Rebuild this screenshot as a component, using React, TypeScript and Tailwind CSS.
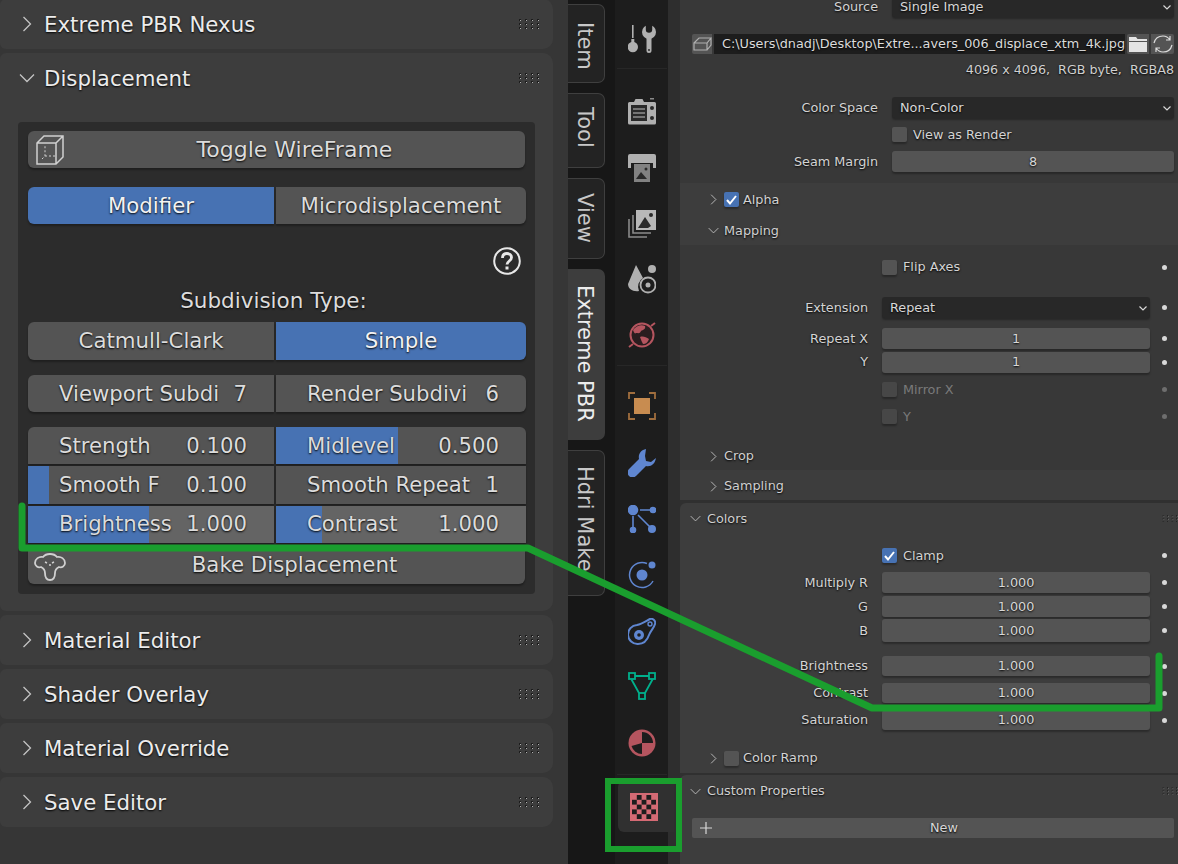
import type { ReactNode } from 'react'

const shadow = '[text-shadow:0_1px_2px_#000]'
const raised = 'shadow-[0_2px_2px_rgba(0,0,0,0.3)]'

function Chevron({ open, size = 16 }: { open?: boolean; size?: number }) {
  return (
    <svg width={size} height={size} viewBox="0 0 16 16" fill="none" stroke="currentColor" strokeWidth="1.3" className="shrink-0 text-[#c4c4c4]">
      {open ? <path d="M1 4.5l7 7 7-7" /> : <path d="M4.5 1l7 7-7 7" />}
    </svg>
  )
}

function Grip({ scale = 1 }: { scale?: number }) {
  const dots = []
  for (let x = 0; x < 4; x++) {
    for (let y = 0; y < 3; y++) {
      dots.push(<rect key={`${x}-${y}`} x={x * 6} y={y * 4} width="2" height="2" fill="#1c1c1c" />)
      dots.push(<rect key={`l${x}-${y}`} x={x * 6 + 1} y={y * 4 + 1} width="1" height="1" fill="#b0b0b0" />)
    }
  }
  return (
    <svg width={22 * scale} height={10 * scale} viewBox="0 0 20 10" className="shrink-0">
      {dots}
    </svg>
  )
}

function Panel({ title, open, children, className }: { title: string; open?: boolean; children?: ReactNode; className: string }) {
  return (
    <div className={`rounded-r-[10px] rounded-l-[6px] bg-[#3d3d3d] ${className}`}>
      <div className="flex h-[50px] items-center pl-[19px] pr-[13px]">
        <Chevron open={open} />
        <span className={`ml-[9px] flex-1 pt-[2px] text-[21.3px] text-[#ececec] ${shadow}`}>{title}</span>
        <Grip />
      </div>
      {children}
    </div>
  )
}

function BigButton({ children, active, className = '' }: { children: ReactNode; active?: boolean; className?: string }) {
  return (
    <div className={`flex items-center justify-center text-[21.3px] text-[#dcdcdc] ${shadow} ${active ? 'bg-[#4772b3] text-[#f2f2f2]' : 'bg-[#545454]'} ${raised} ${className}`}>
      {children}
    </div>
  )
}

function Cell({ label, value, fill, light, className = '' }: { label: string; value: string; fill?: string; light?: boolean; className?: string }) {
  return (
    <div className={`relative flex items-center justify-between pl-[31px] pr-[27px] text-[21.2px] text-[#dcdcdc] ${light ? 'bg-[#646464]' : 'bg-[#545454]'} ${raised} ${className}`}>
      {fill && <div className={`absolute inset-y-0 left-0 bg-[#4772b3] ${fill}`} />}
      <span className={`relative ${shadow}`}>{label}</span>
      <span className={`relative ${shadow}`}>{value}</span>
    </div>
  )
}

function Row({ label, children, dot, disabled, className = '' }: { label?: string; children: ReactNode; dot?: boolean; disabled?: boolean; className?: string }) {
  return (
    <div className={`flex items-center ${className}`}>
      <div className={`w-[188px] shrink-0 text-right text-[12.8px] text-[#d4d4d4] ${shadow}`}>{label}</div>
      <div className="ml-[14px] w-[268px] shrink-0">{children}</div>
      <div className="ml-[12px] flex w-[5px] justify-center">
        {dot && <div className={`h-[5px] w-[5px] rounded-full ${disabled ? 'bg-[#6e6e6e]' : 'bg-[#d8d8d8]'}`} />}
      </div>
    </div>
  )
}

function Field({ children, dark, className = 'h-[21px]' }: { children?: ReactNode; dark?: boolean; className?: string }) {
  return (
    <div className={`relative flex items-center rounded-[3px] text-[12.8px] text-[#d8d8d8] ${shadow} ${dark ? 'justify-start bg-[#282828] pl-[8px]' : 'justify-center bg-[#545454]'} ${raised} ${className}`}>
      {children}
      {dark && (
        <svg width="10" height="10" viewBox="0 0 10 10" fill="none" stroke="#d8d8d8" strokeWidth="1.2" className="absolute right-[2px] top-[6px]">
          <path d="M1.5 3.5L5 7l3.5-3.5" />
        </svg>
      )}
    </div>
  )
}

function Check({ checked, dim, tight, label }: { checked?: boolean; dim?: boolean; tight?: boolean; label: string }) {
  return (
    <div className={`flex items-center ${tight ? 'gap-[4px]' : 'gap-[6px]'}`}>
      <div className={`flex h-[15px] w-[15px] items-center justify-center rounded-[2px] ${raised} ${checked ? 'bg-[#4772b3]' : dim ? 'bg-[#474747]' : 'bg-[#545454]'}`}>
        {checked && (
          <svg width="13" height="13" viewBox="0 0 13 13" fill="none" stroke="#fff" strokeWidth="2">
            <path d="M2 7l3 3.5L11 3" />
          </svg>
        )}
      </div>
      <span className={`text-[12.8px] ${dim ? 'text-[#7a7a7a]' : `text-[#d4d4d4] ${shadow}`}`}>{label}</span>
    </div>
  )
}

function SubHeader({ label, open, className = '' }: { label: ReactNode; open?: boolean; className?: string }) {
  return (
    <div className={`flex items-center pl-[28px] pt-[2px] text-[12.8px] text-[#d0d0d0] ${shadow} ${className}`}>
      <Chevron open={open} size={11} />
      <span className="ml-[5px] flex items-center">{label}</span>
    </div>
  )
}

function Tab({ label, active, className }: { label: string; active?: boolean; className: string }) {
  return (
    <div className={`flex w-[37px] items-center justify-start rounded-r-[7px] pr-[4px] text-[21px] [writing-mode:vertical-rl] ${active ? 'bg-[#3d3d3d] text-[#ececec]' : 'border border-l-0 border-[#3f3f3f] bg-[#232323] text-[#c8c8c8]'} ${className}`}>
      {label}
    </div>
  )
}

function ToolIcon() {
  return (
    <svg width="28" height="28" viewBox="0 0 28 28" fill="#b0b0b0">
      <rect x="4" y="0" width="1.6" height="13" />
      <circle cx="4.8" cy="22" r="5.2" />
      <rect x="3.3" y="14" width="3" height="4" />
      <circle cx="21" cy="7" r="7" />
      <path d="M18.500 10h5v15.500a2.500 2.500 0 0 1-5 0z" />
      <path d="M17.800 -1h6.400v5.500a3.200 3.200 0 0 1-6.400 0z" fill="#1d1d1d" />
      <circle cx="21" cy="25" r="0.900" fill="#1d1d1d" />
    </svg>
  )
}

function RenderIcon() {
  return (
    <svg width="28" height="28" viewBox="0 0 28 28">
      <path d="M1.5 5H6l1.5-3h7L16 5h10.5A1.5 1.5 0 0 1 28 6.5V26a1.5 1.5 0 0 1-1.5 1.5h-25A1.5 1.5 0 0 1 0 26V6.5A1.5 1.5 0 0 1 1.5 5z" fill="#b0b0b0" />
      <rect x="22" y="1" width="4" height="1.5" fill="#8a8a8a" />
      <rect x="3" y="8" width="16" height="16" fill="#2a2a2a" />
      <path d="M5 12h12M5 16h12M5 20h12" stroke="#8e8e8e" strokeWidth="1.3" />
      <circle cx="24" cy="11" r="2" fill="#2a2a2a" />
      <circle cx="24" cy="21" r="2" fill="#2a2a2a" />
    </svg>
  )
}

function OutputIcon() {
  return (
    <svg width="28" height="28" viewBox="0 0 28 28">
      <path d="M2 0h24a2 2 0 0 1 2 2v12h-3V9H3v5H0V2a2 2 0 0 1 2-2z" fill="#b0b0b0" />
      <rect x="6" y="10" width="16" height="18" fill="#828282" />
      <path d="M8 25l5-7 6 7z" fill="#2a2a2a" />
      <circle cx="18" cy="15" r="1.5" fill="#2a2a2a" />
    </svg>
  )
}

function ViewLayerIcon() {
  return (
    <svg width="28" height="28" viewBox="0 0 28 28" fill="none">
      <rect x="8" y="0" width="20" height="20" fill="#b8b8b8" />
      <path d="M10 18l7-11 6 9-3 2z" fill="#2a2a2a" />
      <circle cx="23" cy="5" r="2" fill="#2a2a2a" />
      <path d="M5 5v18h18M1 9v18h18" stroke="#8a8a8a" strokeWidth="1.6" />
    </svg>
  )
}

function SceneIcon() {
  return (
    <svg width="28" height="30" viewBox="0 0 28 30">
      <path d="M8 0L0 19c0 5 5 8 11 7a10 10 0 0 1 4-13z" fill="#b0b0b0" />
      <circle cx="24" cy="4" r="4" fill="#b0b0b0" />
      <circle cx="20" cy="20" r="7.5" fill="none" stroke="#b0b0b0" strokeWidth="1.8" />
      <circle cx="20" cy="20" r="2.5" fill="#b0b0b0" />
    </svg>
  )
}

function WorldIcon() {
  return (
    <svg width="28" height="28" viewBox="0 0 28 28">
      <circle cx="14" cy="14" r="11.5" fill="#2a1d1f" stroke="#b5555f" strokeWidth="2" />
      <path d="M5 9c3-4 8-6 12-4 1 3-2 4-4 5-1 3-3 2-5 2-1 1-2 0-3-3zM12 16c3-1 6 0 9 2-1 3-3 5-6 5-1-2-2-4-3-7z" fill="#b5555f" />
      <path d="M23 5l4-3M5 23l-4 3" stroke="#b5555f" strokeWidth="2" />
    </svg>
  )
}

function ObjectIcon() {
  return (
    <svg width="28" height="28" viewBox="0 0 28 28" fill="none">
      <path d="M7 1H1v6M21 1h6v6M7 27H1v-6M21 27h6v-6" stroke="#a06e3e" strokeWidth="1.8" />
      <rect x="6" y="6" width="16" height="16" fill="#c88c50" />
    </svg>
  )
}

function ModifierIcon() {
  return (
    <svg width="28" height="28" viewBox="0 0 28 28" fill="#5f86d0">
      <path d="M18 0c-5 1-8 5-7 10L1 20a4.5 4.5 0 0 0 7 7l10-10c5 1 9-2 10-8l-5 4-5-1-1-5z" />
    </svg>
  )
}

function ParticlesIcon() {
  return (
    <svg width="28" height="28" viewBox="0 0 28 28" fill="#5f86d0" stroke="#5f86d0" strokeWidth="1.6">
      <circle cx="5" cy="5" r="4.5" />
      <circle cx="25" cy="5" r="2.5" />
      <circle cx="5" cy="25" r="2.5" />
      <circle cx="24" cy="24" r="3.2" />
      <path d="M12 5h11M5 11v12M10 10l12 12" fill="none" />
    </svg>
  )
}

function PhysicsIcon() {
  return (
    <svg width="28" height="28" viewBox="0 0 28 28" fill="none">
      <circle cx="14" cy="14" r="5.5" fill="#5f86d0" />
      <circle cx="24" cy="4" r="3.5" fill="#5f86d0" />
      <path d="M19 2.5A12.5 12.5 0 1 0 25 20" stroke="#5f86d0" strokeWidth="1.5" />
    </svg>
  )
}

function ConstraintIcon() {
  return (
    <svg width="28" height="28" viewBox="0 0 28 28" fill="none">
      <path d="M22 1c3-1 6 2 5 5-1 4-4 6-6 11-2 6-6 9-11 9A9.500 9.500 0 0 1 9 7c5-1 9-4 13-6z" stroke="#5f86d0" strokeWidth="2" />
      <circle cx="11" cy="17" r="5" fill="#5f86d0" />
      <circle cx="11" cy="17" r="1.800" fill="#1d1d1d" />
      <circle cx="22" cy="6" r="2" stroke="#5f86d0" strokeWidth="1.400" />
    </svg>
  )
}

function DataIcon() {
  return (
    <svg width="28" height="28" viewBox="0 0 28 28" fill="none" stroke="#00b08c" strokeWidth="1.800">
      <path d="M7 4h14M3.500 7.500L11 21M24.500 7.500L17 21" />
      <rect x="1" y="1" width="6" height="6" />
      <rect x="21" y="1" width="6" height="6" />
      <rect x="11" y="21" width="6" height="6" />
    </svg>
  )
}

function MaterialIcon() {
  return (
    <svg width="28" height="28" viewBox="0 0 28 28">
      <circle cx="14" cy="14" r="13.500" fill="#b5555f" />
      <path d="M14 14V3a11 11 0 0 1 11 11z" fill="#1d1d1d" />
      <path d="M14 14v11a11 11 0 0 1-10.500-8z" fill="#1d1d1d" />
    </svg>
  )
}

function TextureIcon() {
  const cells = []
  for (let r = 0; r < 5; r++) {
    for (let c = 0; c < 5; c++) {
      if ((r + c) % 2 === 1) cells.push(<rect key={`${r}-${c}`} x={2 + c * 4.800} y={2 + r * 4.800} width="4.800" height="4.800" fill="#1d1d1d" />)
    }
  }
  return (
    <svg width="28" height="28" viewBox="0 0 28 28">
      <rect width="28" height="28" fill="#d46a74" />
      {cells}
    </svg>
  )
}

function CubeIcon() {
  return (
    <svg width="28" height="30" viewBox="0 0 28 30" fill="none" stroke="#d0d0d0" strokeWidth="1.500">
      <path d="M1 8l7-7h19v21l-7 7H1zM1 8h19v21M20 8l7-7" />
      <path d="M6 24l3-3V10M9 21h11" strokeDasharray="2 2" strokeWidth="1" />
    </svg>
  )
}

function BakeIcon() {
  return (
    <svg width="32" height="30" viewBox="0 0 32 30" fill="none" stroke="#d0d0d0" strokeWidth="1.800">
      <path d="M9 6C5 5 1 8 1 12c0 3 3 5 6 4 2 1 4 3 4 6 0 5 2 7 5 7s5-2 5-7c0-3 2-5 4-6 3 1 6-1 6-4 0-4-4-7-8-6C20 2 12 2 9 6z" />
      <path d="M11 11l2 1M20 11l-2 1M15 14h2" strokeWidth="1.400" />
    </svg>
  )
}

export default function App() {
  return (
    <div className="relative flex h-[864px] w-[1178px] overflow-hidden bg-[#353535] font-['DejaVu_Sans',sans-serif]">
      {/* N panel */}
      <div className="flex h-full w-[568px] shrink-0 flex-col bg-[#363636] pr-[15px]">
        <Panel title="Extreme PBR Nexus" className="-mt-[1px] h-[50px] shrink-0" />
        <Panel title="Displacement" open className="mt-[4px] h-[558px] shrink-0">
          <div className="ml-[18px] mt-[19px] h-[472px] w-[517px] rounded-[4px] bg-[#2c2c2c] px-[10px] pt-[9px]">
            <BigButton className="relative h-[37px] rounded-[6px] pl-[36px] text-[22px]">
              <div className="absolute left-[8px] top-[4px]">
                <CubeIcon />
              </div>
              Toggle WireFrame
            </BigButton>
            <div className="mt-[19px] grid h-[37px] grid-cols-[246px_250px] gap-x-[2px]">
              <BigButton active className="rounded-l-[6px]">Modifier</BigButton>
              <BigButton className="rounded-r-[6px]">Microdisplacement</BigButton>
            </div>
            <div className="mt-[23px] flex justify-end pr-[4px]">
              <svg width="28" height="28" viewBox="0 0 28 28" fill="none" stroke="#e8e8e8" strokeWidth="2">
                <circle cx="14" cy="14" r="12.800" />
                <path d="M9.500 11c0-3 2-4.500 4.500-4.500s4.500 1.500 4.500 4c0 3.500-4.500 3.500-4.500 7" strokeWidth="2.800" />
                <rect x="12.500" y="19.500" width="3" height="3" fill="#e8e8e8" stroke="none" />
              </svg>
            </div>
            <div className={`mt-[12px] h-[27px] pr-[6px] text-center text-[21.500px] leading-[27px] text-[#dcdcdc] ${shadow}`}>Subdivision Type:</div>
            <div className="mt-[8px] grid h-[38px] grid-cols-[246px_250px] gap-x-[2px]">
              <BigButton className="rounded-l-[6px]">Catmull-Clark</BigButton>
              <BigButton active className="rounded-r-[6px]">Simple</BigButton>
            </div>
            <div className="mt-[15px] grid h-[37px] grid-cols-[246px_250px] gap-x-[2px]">
              <Cell label="Viewport Subdi" value="7" className="rounded-l-[6px]" />
              <Cell label="Render Subdivi" value="6" className="rounded-r-[6px]" />
            </div>
            <div className="mt-[15px] grid h-[116px] grid-cols-[246px_250px] grid-rows-3 gap-[2px]">
              <Cell label="Strength" value="0.100" className="rounded-tl-[6px]" />
              <Cell label="Midlevel" value="0.500" fill="w-[122px]" className="rounded-tr-[6px]" />
              <Cell label="Smooth F" value="0.100" fill="w-[21px]" />
              <Cell label="Smooth Repeat" value="1" />
              <Cell label="Brightness" value="1.000" fill="w-[121px]" light />
              <Cell label="Contrast" value="1.000" fill="w-[46px]" light />
            </div>
            <BigButton className="relative mt-[2px] h-[39px] rounded-b-[6px] pl-[36px]">
              <div className="absolute left-[6px] top-[6px]">
                <BakeIcon />
              </div>
              Bake Displacement
            </BigButton>
          </div>
        </Panel>
        <Panel title="Material Editor" className="mt-[4px] h-[50px] shrink-0" />
        <Panel title="Shader Overlay" className="mt-[4px] h-[50px] shrink-0" />
        <Panel title="Material Override" className="mt-[4px] h-[50px] shrink-0" />
        <Panel title="Save Editor" className="mt-[4px] h-[50px] shrink-0" />
      </div>

      {/* tabs */}
      <div className="flex h-full w-[47px] shrink-0 flex-col bg-[#171717] pt-[4px]">
        <Tab label="Item" className="h-[79px] pt-[17px]" />
        <Tab label="Tool" className="mt-[10px] h-[75px] pt-[13px]" />
        <Tab label="View" className="mt-[10px] h-[81px] pt-[14px]" />
        <Tab label="Extreme PBR" active className="mt-[10px] h-[171px] pt-[16px]" />
        <Tab label="Hdri Make" className="mt-[10px] h-[146px] pt-[15px]" />
      </div>

      {/* properties editor tabs */}
      <div className="flex h-full w-[53px] shrink-0 flex-col items-center bg-[#1d1d1d] pt-[25px]">
        <ToolIcon />
        <div className="mt-[15px] h-px w-[50px] bg-[#272727]" />
        <div className="mt-[28px]"><RenderIcon /></div>
        <div className="mt-[29px]"><OutputIcon /></div>
        <div className="mt-[28px]"><ViewLayerIcon /></div>
        <div className="mt-[27px]"><SceneIcon /></div>
        <div className="mt-[26px]"><WorldIcon /></div>
        <div className="mt-[16px] h-px w-[50px] bg-[#272727]" />
        <div className="mt-[26px]"><ObjectIcon /></div>
        <div className="mt-[29px]"><ModifierIcon /></div>
        <div className="mt-[28px]"><ParticlesIcon /></div>
        <div className="mt-[28px]"><PhysicsIcon /></div>
        <div className="mt-[29px]"><ConstraintIcon /></div>
        <div className="mt-[26px]"><DataIcon /></div>
        <div className="mt-[29px]"><MaterialIcon /></div>
        <div className="mt-[17px] h-px w-[50px] bg-[#272727]" />
        <div className="relative z-10 mt-[6px] ml-[3px] flex h-[51px] w-[56px] shrink-0 items-center self-start rounded-l-[6px] bg-[#303030] pl-[12px]">
          <TextureIcon />
        </div>
      </div>

      {/* gutter */}
      <div className="h-full w-[12px] shrink-0 bg-[#2e2e2e]" />

      {/* properties */}
      <div className="h-full w-[498px] shrink-0 bg-[#303030] text-[12.8px]">
        <div className="h-[183px] overflow-hidden bg-[#383838] pl-[12px]">
          <div className="-mt-[4px] flex h-[21px] items-center">
            <div className={`w-[186px] text-right leading-[17px] text-[#d4d4d4] ${shadow}`}>Source</div>
            <div className="ml-[14px] w-[282px]">
              <Field dark>Single Image</Field>
            </div>
          </div>
          <div className="mt-[17px] flex h-[20px] items-stretch">
            <div className="flex w-[20px] items-center justify-center rounded-l-[2px] bg-[#545454]">
              <svg width="19" height="14" viewBox="0 0 19 14" fill="none" stroke="#b0b0b0" strokeWidth="1.200">
                <path d="M1 6l5-5h12l-4 5H1v7h13V6M14 13l4-5V1" />
              </svg>
            </div>
            <div className={`ml-[2px] flex w-[411px] items-center bg-[#1d1d1d] pl-[8px] text-[12.8px] whitespace-nowrap text-[#dcdcdc] ${shadow}`}>
              C:\Users\dnadj\Desktop\Extre...avers_006_displace_xtm_4k.jpg
            </div>
            <div className="ml-[2px] flex w-[22px] items-center justify-center rounded-l-[2px] bg-[#545454]">
              <svg width="18" height="16" viewBox="0 0 18 16" fill="#e4e4e4">
                <path d="M0 1h7l1.500 2H18v2H0zM0 6h18v10H0z" />
              </svg>
            </div>
            <div className="ml-[2px] flex w-[23px] items-center justify-center rounded-r-[2px] bg-[#545454]">
              <svg width="20" height="18" viewBox="0 0 20 18" fill="none" stroke="#dcdcdc" strokeWidth="1.200">
                <path d="M1 8c1-4 4-7 9-7 3 0 5 1 7 4M17 1v4h-4M19 10c-1 4-4 7-9 7-3 0-5-1-7-4M3 17v-4h4" />
              </svg>
            </div>
          </div>
          <div className={`mt-[6px] h-[20px] pr-[4px] text-right text-[12.7px] leading-[20px] whitespace-pre text-[#d0d0d0] ${shadow}`}>4096 x 4096,  RGB byte,  RGBA8</div>
          <div className="mt-[17px] flex h-[21px] items-center">
            <div className={`w-[186px] text-right text-[#d4d4d4] ${shadow}`}>Color Space</div>
            <div className="ml-[14px] w-[282px]"><Field dark>Non-Color</Field></div>
          </div>
          <div className="mt-[8px] ml-[200px] flex h-[17px] items-center"><Check label="View as Render" /></div>
          <div className="mt-[8px] flex h-[21px] items-center">
            <div className={`w-[186px] text-right text-[#d4d4d4] ${shadow}`}>Seam Margin</div>
            <div className="ml-[14px] w-[282px]"><Field>8</Field></div>
          </div>
        </div>

        <div className="h-[31px] bg-[#3d3d3d]">
          <SubHeader className="h-[31px]" label={<Check checked tight label="Alpha" />} />
        </div>
        <div className="h-[256px] bg-[#383838]">
          <SubHeader open className="h-[31px] bg-[#3d3d3d]" label="Mapping" />
          <Row dot className="mt-[14px] h-[16px]"><Check label="Flip Axes" /></Row>
          <Row dot label="Extension" className="mt-[22px] h-[21px]"><Field dark>Repeat</Field></Row>
          <Row dot label="Repeat X" className="mt-[10px] h-[21px]"><Field>1</Field></Row>
          <Row dot label="Y" className="mt-[2px] h-[22px]"><Field>1</Field></Row>
          <Row dot disabled className="mt-[9px] h-[15px]"><Check dim label="Mirror X" /></Row>
          <Row dot disabled className="mt-[12px] h-[15px]"><Check dim label="Y" /></Row>
          <SubHeader className="mt-[19px] h-[24px]" label="Crop" />
        </div>
        <SubHeader className="h-[30px] bg-[#3d3d3d]" label="Sampling" />

        <div className="mt-[3px] h-[270px] rounded-tl-[6px] bg-[#3d3d3d]">
          <div className={`flex h-[30px] items-center pl-[10px] pt-[1px] text-[#d0d0d0] ${shadow}`}>
            <Chevron open size={11} />
            <span className="ml-[6px] flex-1">Colors</span>
            <Grip scale={0.75} />
          </div>
          <Row dot className="mt-[15px] h-[15px]"><Check checked label="Clamp" /></Row>
          <Row dot label="Multiply R" className="mt-[9px] h-[21px]"><Field>1.000</Field></Row>
          <Row dot label="G" className="mt-[3px] h-[21px]"><Field>1.000</Field></Row>
          <Row dot label="B" className="mt-[2px] h-[23px]"><Field className="h-[23px]">1.000</Field></Row>
          <Row dot label="Brightness" className="mt-[14px] h-[20px]"><Field className="h-[20px]">1.000</Field></Row>
          <Row dot label="Contrast" className="mt-[7px] h-[20px]"><Field className="h-[20px]">1.000</Field></Row>
          <Row dot label="Saturation" className="mt-[7px] h-[20px]"><Field className="h-[20px]">1.000</Field></Row>
          <div className="mt-[16px] flex h-[24px] items-center pl-[28px]">
            <Chevron size={11} />
            <div className="ml-[5px]"><Check tight label="Color Ramp" /></div>
          </div>
        </div>

        <div className="mt-[2px] h-[89px] rounded-tl-[6px] bg-[#3d3d3d] pl-[12px]">
          <div className={`-ml-[2px] flex h-[31px] items-center pt-[1px] text-[#d0d0d0] ${shadow}`}>
            <Chevron open size={11} />
            <span className="ml-[6px] flex-1">Custom Properties</span>
            <Grip scale={0.75} />
          </div>
          <div className={`relative mt-[12px] flex h-[20px] w-[482px] items-center justify-center rounded-[2px] bg-[#545454] pl-[22px] text-[#d8d8d8] ${shadow}`}>
            <svg width="12" height="12" viewBox="0 0 12 12" stroke="#d8d8d8" strokeWidth="1.200" className="absolute left-[8px] top-[4px]">
              <path d="M6 0v12M0 6h12" />
            </svg>
            New
          </div>
        </div>
      </div>

      {/* green annotation on top of the screenshot */}
      <svg width="1178" height="864" viewBox="0 0 1178 864" fill="none" className="pointer-events-none absolute inset-0 z-20">
        <path d="M22 506v42h506l344 160h287v-52" stroke="#1a9e2e" strokeWidth="7" strokeLinecap="round" strokeLinejoin="round" />
      </svg>
      <div className="pointer-events-none absolute left-[605px] top-[778px] z-20 h-[74px] w-[77px] border-[6px] border-[#1a9e2e]" />
    </div>
  )
}
